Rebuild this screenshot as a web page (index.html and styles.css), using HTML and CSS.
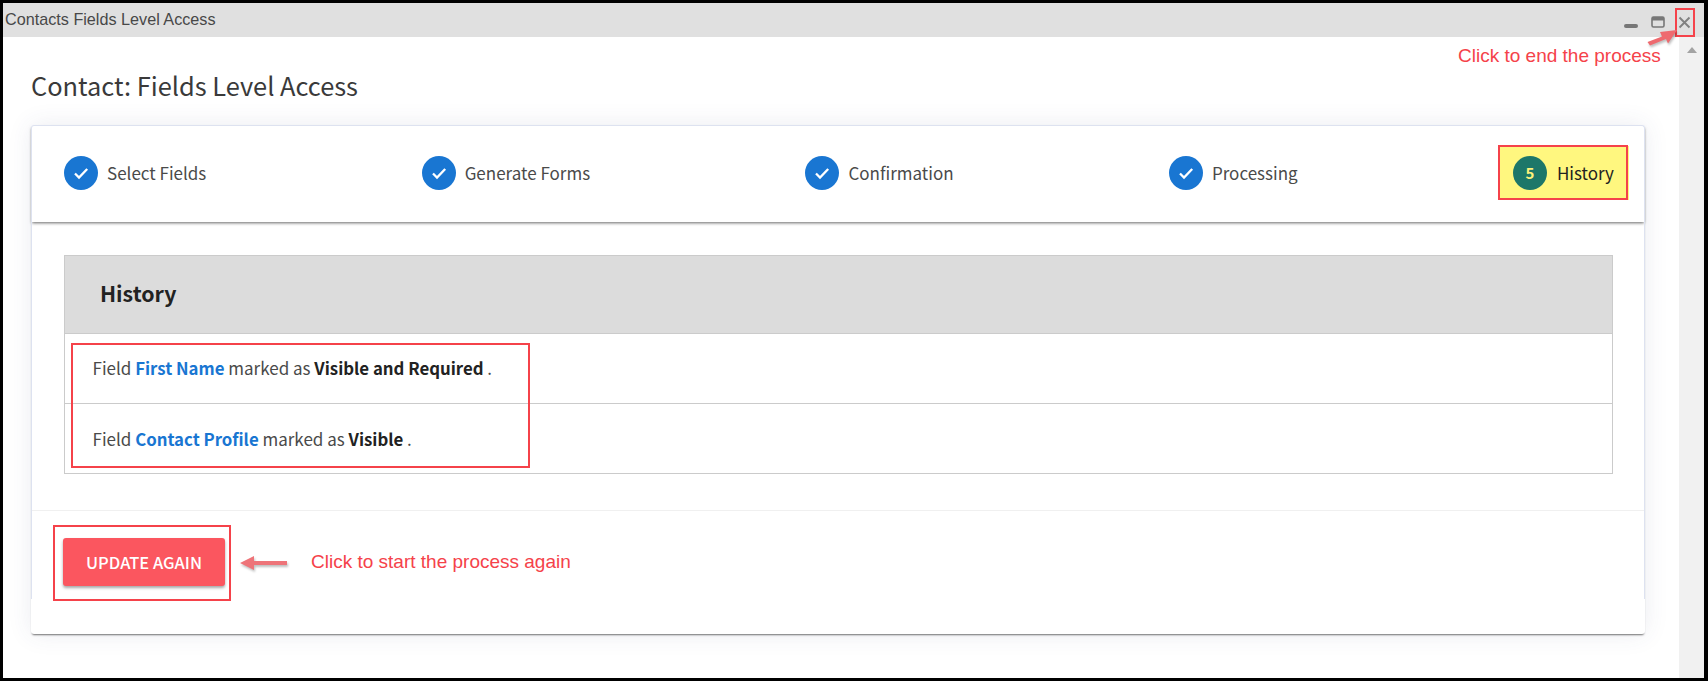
FILE: index.html
```html
<!DOCTYPE html>
<html lang="en">
<head>
<meta charset="utf-8">
<title>Contacts Fields Level Access</title>
<link rel="stylesheet" href="styles.css">
</head>
<body>
<div class="frame">
  <header class="titlebar">
    <span class="titlebar-text">Contacts Fields Level Access</span>
    <div class="win-controls">
      <svg class="win-icon" width="14" height="14" viewBox="0 0 14 14"><rect x="0" y="9" width="14" height="4" rx="2" fill="#777"/></svg>
      <svg class="win-icon" width="14" height="14" viewBox="0 0 14 14"><rect x="1" y="2" width="12" height="10" rx="1.500" fill="none" stroke="#777" stroke-width="1.600"/><rect x="1" y="2" width="12" height="3.500" fill="#777"/></svg>
      <svg class="win-icon" width="13" height="13" viewBox="0 0 13 13"><path d="M1.500 1.500l10 10M11.500 1.500l-10 10" stroke="#808080" stroke-width="1.900" fill="none"/></svg>
    </div>
  </header>
  <div class="workspace">
    <main class="main">
      <h1 class="page-title">Contact: Fields Level Access</h1>
      <section class="card">
        <nav class="stepper">
          <div class="step">
            <span class="step-badge"><svg width="20" height="20" viewBox="0 0 20 20"><path d="M4 10.500l4 4 8.200-8.500" fill="none" stroke="#fff" stroke-width="2.300"/></svg></span>
            <span class="step-label">Select Fields</span>
          </div>
          <div class="step">
            <span class="step-badge"><svg width="20" height="20" viewBox="0 0 20 20"><path d="M4 10.500l4 4 8.200-8.500" fill="none" stroke="#fff" stroke-width="2.300"/></svg></span>
            <span class="step-label">Generate Forms</span>
          </div>
          <div class="step">
            <span class="step-badge"><svg width="20" height="20" viewBox="0 0 20 20"><path d="M4 10.500l4 4 8.200-8.500" fill="none" stroke="#fff" stroke-width="2.300"/></svg></span>
            <span class="step-label">Confirmation</span>
          </div>
          <div class="step">
            <span class="step-badge"><svg width="20" height="20" viewBox="0 0 20 20"><path d="M4 10.500l4 4 8.200-8.500" fill="none" stroke="#fff" stroke-width="2.300"/></svg></span>
            <span class="step-label">Processing</span>
          </div>
          <div class="step step-current">
            <span class="step-badge step-badge-current">5</span>
            <span class="step-label">History</span>
          </div>
        </nav>
        <div class="card-body">
          <div class="history">
            <h2 class="history-head">History</h2>
            <div class="history-row">Field <a class="field-link">First Name</a> marked as <b>Visible and Required</b> .</div>
            <div class="history-row history-row-last">Field <a class="field-link">Contact Profile</a> marked as <b>Visible</b> .</div>
          </div>
        </div>
        <footer class="card-footer">
          <button class="update-btn" type="button">UPDATE AGAIN</button>
        </footer>
      </section>
    </main>
    <aside class="scrollbar"><span class="scroll-up"></span></aside>
  </div>

  <div class="mark mark-close"></div>
  <div class="mark mark-step"></div>
  <div class="mark mark-rows"></div>
  <div class="mark mark-btn"></div>
  <span class="note note-end">Click to end the process</span>
  <span class="note note-start">Click to start the process again</span>
  <svg class="arrow arrow-close" width="32" height="20" viewBox="0 0 32 20"><path d="M0.500 14L15 8.500l-2-4.500L30 2 21 15.500l-2-4.500L3 17.500z" fill="#ee6a6f"/></svg>
  <svg class="arrow arrow-btn" width="50" height="16" viewBox="0 0 50 16"><path d="M1 8l14-7v5h33v4H15v5z" fill="#ee7479"/></svg>
</div>
</body>
</html>
```
FILE: styles.css
```css
* { box-sizing: border-box; }
html, body { margin: 0; padding: 0; height: 100%; overflow: hidden; background: #fff; }
body { font-family: "Noto Sans CJK SC", "Source Sans Pro", "Noto Sans", sans-serif; color: #333; }

.frame {
  position: relative;
  width: 1708px;
  height: 681px;
  border: solid #000;
  border-width: 3px 4px 3px 3px;
  display: flex;
  flex-direction: column;
  background: #fff;
}

.titlebar {
  height: 34px;
  flex: none;
  background: #e0e0e0;
  display: flex;
  align-items: center;
  justify-content: space-between;
  padding: 0 13px 0 2px;
}
.titlebar-text { font: 16.200px/20px "Liberation Sans", Arial, sans-serif; color: #484848; margin-top: -2px; }
.win-controls { display: flex; align-items: center; gap: 13px; margin-top: 4px; }
.win-icon { display: block; }

.workspace { flex: 1; display: flex; min-height: 0; }
.main { flex: 1; padding: 29px 34px 44px 28px; display: flex; flex-direction: column; min-width: 0; }
.page-title { margin: 0 0 21px; font-size: 25.400px; line-height: 38px; font-weight: 400; color: #3a3a3a; }

.scrollbar { width: 25px; flex: none; background: #f1f1f1; display: flex; justify-content: center; padding-top: 10px; }
.scroll-up { width: 0; height: 0; border: solid transparent; border-width: 0 5.500px 6px; border-bottom-color: #a3a3a3; }

.card {
  position: relative;
  flex: 1;
  display: flex;
  flex-direction: column;
  background: #fff;
  border-radius: 3px;
  box-shadow: 0 2px 2px -1px rgba(0,0,0,.55), 0 0 24px rgba(60,70,120,.10);
}
.card::after {
  content: "";
  position: absolute;
  left: 0; right: 0; top: 0; bottom: 35px;
  border: solid #dde2f0;
  border-width: 1px 1px 0;
  border-radius: 3px 3px 0 0;
  pointer-events: none;
}

.stepper {
  height: 97px;
  flex: none;
  padding: 0 31px 2px 33px;
  display: flex;
  align-items: center;
  justify-content: space-between;
  box-shadow: 0 2px 3px -1px rgba(0,0,0,.6);
  position: relative;
}
.step { display: flex; align-items: center; gap: 9px; }
.step-badge {
  width: 34px; height: 34px; border-radius: 50%;
  background: #1976d2;
  display: flex; align-items: center; justify-content: center;
  color: #fff;
}
.step-label { font-size: 17px; line-height: 24px; color: #4a4a4a; }
.step-current { background: #fff77f; margin: 0 -15px; padding: 0 15px; height: 54px; gap: 10px; }
.step-current .step-label { color: #222; }
.step-badge-current { background: #1d7769; color: #fff27a; font-size: 15px; font-weight: 700; }

.card-body { flex: none; height: 288px; padding: 33px 32px 0 33px; }
.history { border: 1px solid #cbcbcb; height: 219px; display: flex; flex-direction: column; }
.history-head {
  margin: 0;
  height: 78px;
  flex: none;
  padding: 0 0 4px 35px;
  display: flex;
  align-items: center;
  background: #dcdcdc;
  border-bottom: 1px solid #cbcbcb;
  font-size: 21.300px;
  font-weight: 700;
  color: #222;
}
.history-row {
  flex: 1;
  padding: 22px 0 0 27.500px;
  font-size: 17px;
  line-height: 24px;
  color: #4a4a4a;
  white-space: pre;
}
.history-row-last { border-top: 1px solid #cbcbcb; padding-top: 23px; }
.history-row b { color: #222; font-size: 16.800px; font-weight: 700; }
.field-link { color: #1976d2; font-size: 16.800px; font-weight: 700; }

.card-footer { flex: 1; border-top: 1px solid #f0f0f0; padding: 27px 0 0 32px; }
.update-btn {
  display: block;
  width: 162px;
  height: 48px;
  padding: 0;
  border: 0;
  border-radius: 3px;
  background: #fb565f;
  color: #fff;
  font: 500 16.500px/24px "Noto Sans CJK SC", "Noto Sans", sans-serif;
  box-shadow: 0 2px 3px rgba(0,0,0,.35);
}

.mark { position: absolute; border: 2px solid #f5424a; pointer-events: none; }
.mark-close { left: 1672px; top: 5px; width: 20px; height: 29px; }
.mark-step { left: 1495px; top: 142px; width: 130px; height: 55px; }
.mark-rows { left: 68px; top: 340px; width: 459px; height: 125px; }
.mark-btn { left: 50px; top: 522px; width: 178px; height: 76px; }

.note { position: absolute; font: 19px/22px "Liberation Sans", Arial, sans-serif; color: #f5424a; white-space: nowrap; }
.note-end { left: 1455px; top: 42px; }
.note-start { left: 308px; top: 548px; }

.arrow { position: absolute; filter: drop-shadow(1px 2px 1px rgba(0,0,0,.25)); }
.arrow-close { left: 1644px; top: 25px; }
.arrow-btn { left: 236px; top: 552px; }
```
